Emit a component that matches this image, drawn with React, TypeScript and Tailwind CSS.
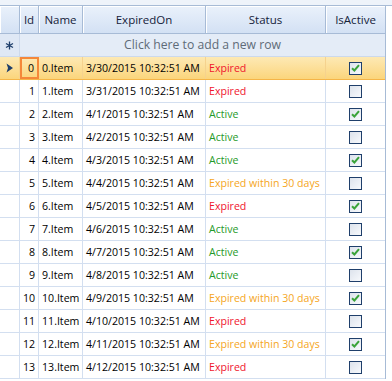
import React from "react";

type Row = { id: number; date: string; status: string; active: boolean };

const rows: Row[] = [
  { id: 0, date: "3/30/2015 10:32:51 AM", status: "Expired", active: true },
  { id: 1, date: "3/31/2015 10:32:51 AM", status: "Expired", active: false },
  { id: 2, date: "4/1/2015 10:32:51 AM", status: "Active", active: true },
  { id: 3, date: "4/2/2015 10:32:51 AM", status: "Active", active: false },
  { id: 4, date: "4/3/2015 10:32:51 AM", status: "Active", active: true },
  { id: 5, date: "4/4/2015 10:32:51 AM", status: "Expired within 30 days", active: false },
  { id: 6, date: "4/5/2015 10:32:51 AM", status: "Expired", active: true },
  { id: 7, date: "4/6/2015 10:32:51 AM", status: "Active", active: false },
  { id: 8, date: "4/7/2015 10:32:51 AM", status: "Active", active: true },
  { id: 9, date: "4/8/2015 10:32:51 AM", status: "Active", active: false },
  { id: 10, date: "4/9/2015 10:32:51 AM", status: "Expired within 30 days", active: true },
  { id: 11, date: "4/10/2015 10:32:51 AM", status: "Expired", active: false },
  { id: 12, date: "4/11/2015 10:32:51 AM", status: "Expired within 30 days", active: true },
  { id: 13, date: "4/12/2015 10:32:51 AM", status: "Expired", active: false },
];

function statusClass(s: string) {
  if (s === "Expired") return "text-[#f0142d]";
  if (s === "Active") return "text-[#1f9a2a]";
  return "text-[#f5a623]";
}

function Check({ on }: { on: boolean }) {
  return (
    <div className="w-[13px] h-[13px] border border-[#1f3f6b] bg-gradient-to-br from-[#dde3ec] to-[#f7f9fc] flex items-center justify-center">
      {on && (
        <svg width="9" height="8" viewBox="0 0 9 8">
          <path d="M1 4.2 L3.4 6.5 L8 1.2" stroke="#3aa33a" strokeWidth="2" fill="none" />
        </svg>
      )}
    </div>
  );
}

const hdr =
  "h-full flex items-center justify-center border-r border-r-[#a7bbd6] shadow-[inset_1px_1px_0_#ffffff]";

export default function App() {
  return (
    <div className="w-[392px] h-[381px] overflow-hidden bg-white text-[10.6px] leading-none" style={{ fontFamily: '"Open Sans", "Noto Sans", sans-serif' }}>
      <div className="h-[6px] bg-[#eef3fa] border-b border-b-[#a7bbd6]" />
      <div className="w-[386px] border-r border-r-[#a7bbd6]">
        {/* header */}
        <div className="flex h-[28px] bg-gradient-to-b from-[#eaf1fb] to-[#d3e1f4] border-b border-b-[#a7bbd6] text-[#15223a] text-[11.5px]">
          <div className={`w-[20px] ${hdr}`} />
          <div className={`w-[19px] ${hdr}`}>Id</div>
          <div className={`w-[44px] ${hdr}`}>Name</div>
          <div className={`w-[123px] ${hdr}`}>ExpiredOn</div>
          <div className={`w-[120px] ${hdr}`}>Status</div>
          <div className={`flex-1 ${hdr} border-r-0`}>IsActive</div>
        </div>
        {/* new row */}
        <div className="flex h-[23px] bg-[#e4ecf7] border-b border-b-[#ccd9ec]">
          <div className="w-[20px] flex items-center justify-center border-r border-r-[#ccd9ec] bg-[#dfe8f5]">
            <svg width="9" height="9" viewBox="0 0 9 9">
              <path d="M4.5 0.5 V8.5 M1 2.5 L8 6.5 M1 6.5 L8 2.5" stroke="#1f3f6b" strokeWidth="1.3" />
            </svg>
          </div>
          <div className="flex-1 flex items-center justify-center text-[#5f6b78] text-[12.2px]">Click here to add a new row</div>
        </div>
        {rows.map((r) => {
          const sel = r.id === 0;
          const rowBg = sel
            ? "bg-gradient-to-b from-[#fde9b4] to-[#fbd57b] border-b-[#f5b548]"
            : "bg-white border-b-[#d3dff0]";
          const cell = sel ? "border-r-[#f5d28e]" : "border-r-[#d3dff0]";
          return (
            <div key={r.id} className={`flex h-[23px] border-b ${rowBg} text-black`}>
              <div className={`w-[20px] flex items-center justify-center border-r ${cell}`}>
                {sel && (
                  <svg width="9" height="10" viewBox="0 0 9 10">
                    <path d="M1.5 0.5 L8 5 L1.5 9.5 L3 5 Z" fill="#1f3f6b" />
                  </svg>
                )}
              </div>
              <div
                className={`w-[19px] flex items-center justify-end pr-[3px] ${
                  sel ? "border-2 border-[#f5883a]" : `border-r ${cell}`
                }`}
              >
                {r.id}
              </div>
              <div className={`w-[44px] flex items-center pl-[3px] border-r ${cell} whitespace-nowrap`}>{r.id}.Item</div>
              <div className={`w-[123px] flex items-center pl-[3px] border-r ${cell} whitespace-nowrap`}>{r.date}</div>
              <div className={`w-[120px] flex items-center pl-[3px] border-r ${cell} whitespace-nowrap ${statusClass(r.status)}`}>{r.status}</div>
              <div className="flex-1 flex items-center justify-center">
                <Check on={r.active} />
              </div>
            </div>
          );
        })}
      </div>
    </div>
  );
}
